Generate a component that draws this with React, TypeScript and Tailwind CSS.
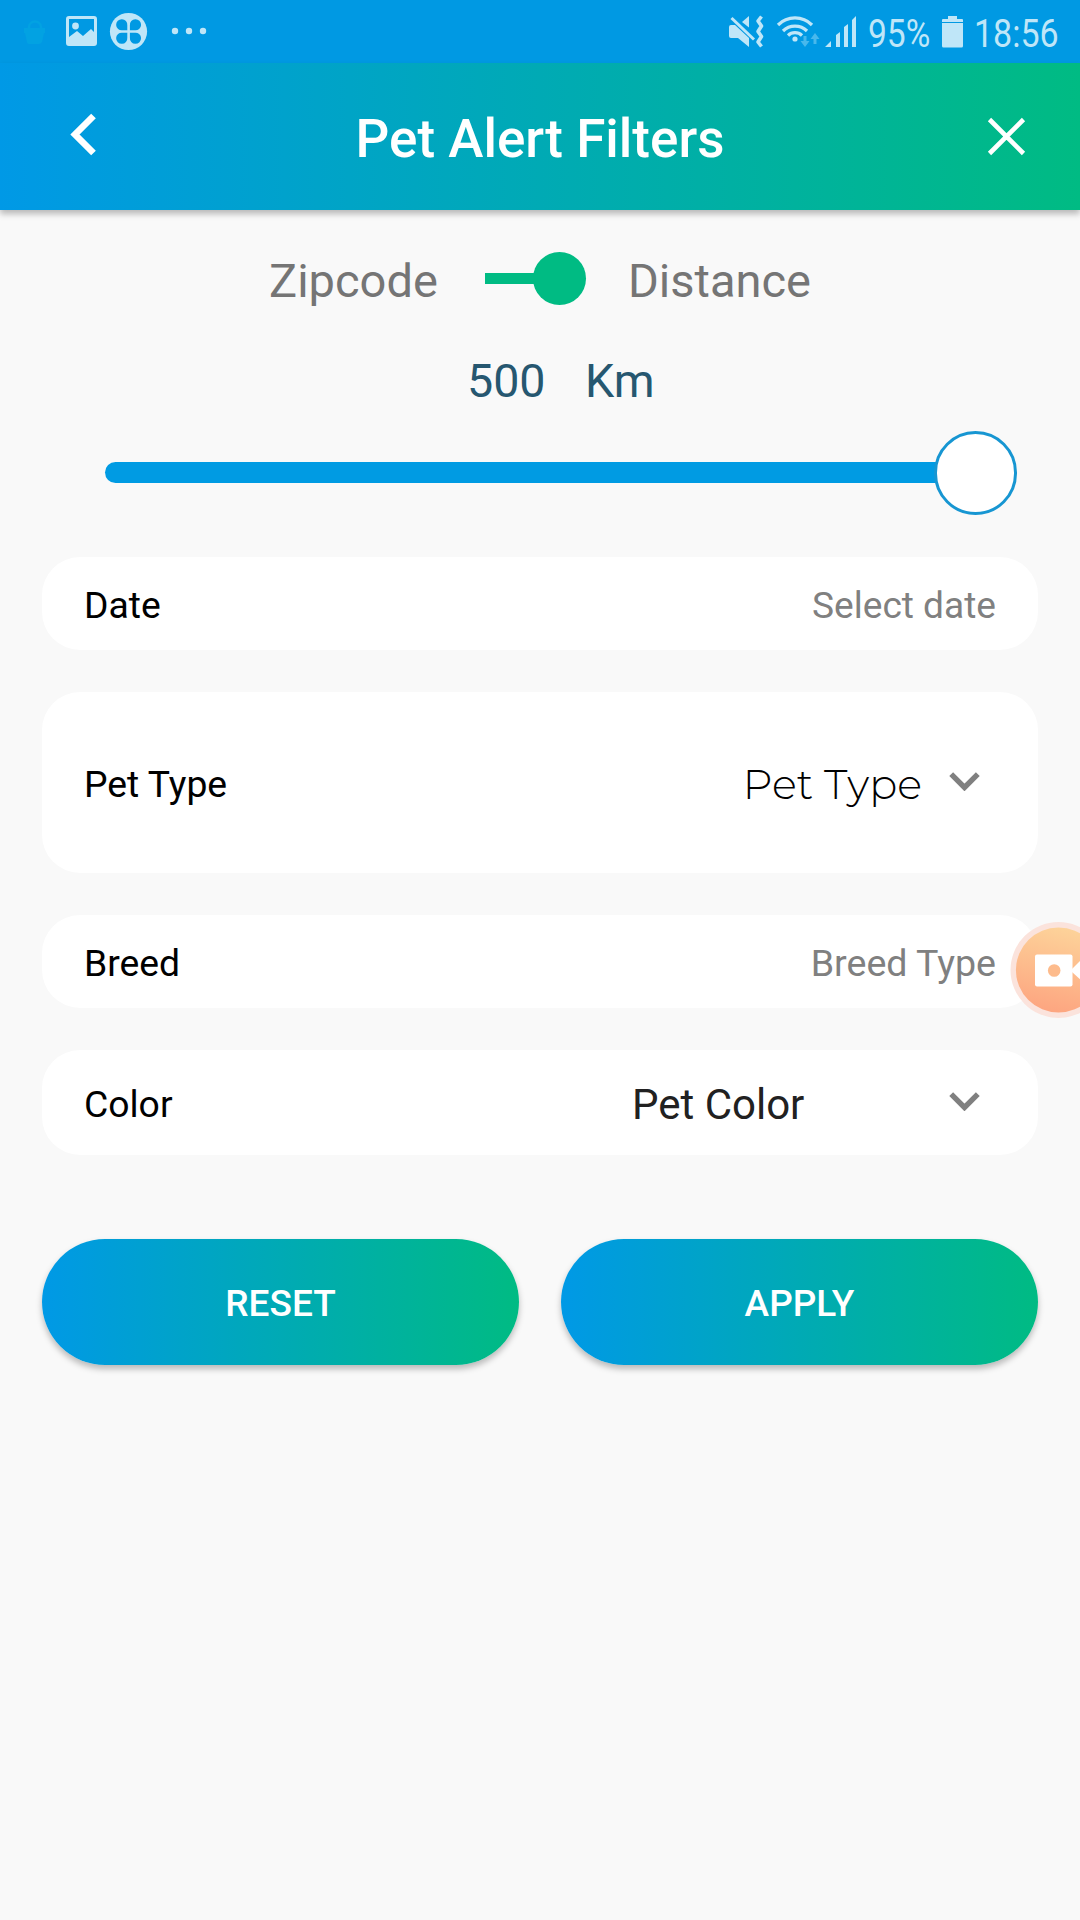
import React from "react";

function Chevron() {
  return (
    <svg width="31" height="19" viewBox="0 0 31 19" className="relative -top-px block">
      <path d="M2.2 2.2 15.5 15.5 28.8 2.2" fill="none" stroke="#808080" strokeWidth="5.4" />
    </svg>
  );
}

function StatusIconsLeft() {
  return (
    <svg width="240" height="63" viewBox="0 0 240 63" className="block">
      <path d="M24 28h21v5h-1l-2 9q-1 2-3 2H30q-3 0-3-2l-2-9h-1z" fill="#02a2e2" />
      <path d="M29 29v-2a6 5.500 0 0 1 12 0v2" fill="none" stroke="#02a2e2" strokeWidth="2.5" />
      <g fill="#bfe6f8">
        <path fillRule="evenodd" d="M69 16h25q3 0 3 3v24q0 3-3 3H69q-3 0-3-3V19q0-3 3-3zm0 3v18l8-6 6 5 8-7 3 3V19z" />
        <circle cx="75.500" cy="26" r="3.400" />
        <circle cx="128.500" cy="31.500" r="18.600" />
        <circle cx="175" cy="31" r="3.200" />
        <circle cx="189" cy="31" r="3.200" />
        <circle cx="203" cy="31" r="3.200" />
      </g>
      <g fill="#0099e3">
        <path d="M127.300 30.300h-5a5.600 5.600 0 1 1 5-5z" />
        <path d="M129.900 30.300h5a5.600 5.600 0 1 0-5-5z" />
        <path d="M127.300 32.700h-5a5.600 5.600 0 1 0 5 5z" />
        <path d="M129.900 32.700h5a5.600 5.600 0 1 1-5 5z" />
      </g>
    </svg>
  );
}

function StatusIconsRight() {
  return (
    <svg width="150" height="63" viewBox="720 0 150 63" className="block">
      <g fill="#bfe6f8">
        <path d="M731 25h4l14 13v9l-11-9h-7q-2 0-2-2v-9q0-2 2-2z" />
        <path d="M749 16v11.500l-7-5.500z" />
        <circle cx="795" cy="39" r="2.600" />
        <path d="M825 47h6v-6zM836 47h4V32l-4 3zM844 47h4V24l-4 3zM852 47h4V16l-4 4z" />
      </g>
      <g fill="none" stroke="#bfe6f8">
        <path d="m731.500 18 22.500 21.500" strokeWidth="3" />
        <path
          d="M761.500 16.500 758 21l3.500 5-3.500 5.500 3.500 5L758 42l3.500 4.500"
          strokeWidth="3.600"
          strokeLinejoin="round"
        />
        <path d="M778 25a24 24 0 0 1 34 0M783 31a17 17 0 0 1 24 0M788 35.500a10 10 0 0 1 14 0" strokeWidth="3.200" />
      </g>
      <path d="M803.500 36h3v5h3l-4.500 6-4.500-6h3zM813.500 44h3v-5h3l-4.500-6-4.500 6h3z" fill="#48b8ec" />
    </svg>
  );
}

function Row({ label, height, children }: { label: string; height: string; children: React.ReactNode }) {
  return (
    <section className={"flex items-center justify-between rounded-[38px] bg-white pl-[42px] " + height}>
      <span className="pt-[5px] text-[37.3px] leading-none text-black">{label}</span>
      {children}
    </section>
  );
}

function GradientButton({ children }: { children: string }) {
  return (
    <button className="flex h-[126px] flex-1 items-center justify-center rounded-full bg-linear-to-r/srgb from-[#0099e6] to-[#00bb83] pt-0.5 text-[37px] leading-none font-medium text-white shadow-[0_4px_6px_rgba(0,0,0,0.26)]">
      {children}
    </button>
  );
}

export default function App() {
  return (
    <div className="relative flex h-[1920px] w-[1080px] flex-col overflow-hidden bg-[#f9f9f9] font-['Roboto',sans-serif]">
      <div className="flex h-[63px] justify-between bg-[#0099e3] text-[#bfe6f8]">
        <StatusIconsLeft />
        <div className="flex h-[63px] items-center">
          <StatusIconsRight />
          <span className="-ml-[2px] w-[62px] origin-left scale-x-[0.85] pt-[5px] text-[39.5px] leading-none whitespace-nowrap">95%</span>
          <svg width="36" height="63" viewBox="930 0 36 63" className="block">
            <path d="M948 16h9v3h5q1 0 1 1v2h-21v-2q0-1 1-1h5zM942 23h21v23q0 1.500-1.500 1.500h-18q-1.500 0-1.500-1.500z" fill="#bfe6f8" />
          </svg>
          <span className="ml-[8px] w-[106px] origin-left scale-x-[0.86] pt-[5px] text-[39.5px] leading-none whitespace-nowrap">18:56</span>
        </div>
      </div>

      <header className="flex h-[147px] items-center justify-between bg-linear-to-r/srgb from-[#0099e6] to-[#00bb83] shadow-[0_4px_6px_rgba(0,0,0,0.26)]">
        <svg width="120" height="147" viewBox="0 63 120 147">
          <path d="M93.500 116 75 134.500 93.500 153" fill="none" stroke="#fff" strokeWidth="6.600" />
        </svg>
        <h1 className="pt-1.5 text-[53px] leading-none font-medium text-white">Pet Alert Filters</h1>
        <svg width="120" height="147" viewBox="960 63 120 147">
          <path d="m989.500 119.500 34 34m0-34-34 34" fill="none" stroke="#fff" strokeWidth="4.600" />
        </svg>
      </header>

      <div className="mt-[42px] flex h-[53px] items-center text-[47px] leading-none text-[#757575]">
        <span className="ml-[269px] w-[216px] pt-[3px]">Zipcode</span>
        <span className="h-[11px] w-[50px] bg-[#00bb83]" />
        <span className="-ml-0.5 size-[53px] rounded-full bg-[#00bb83]" />
        <span className="ml-[42px] pt-[3px]">Distance</span>
      </div>

      <div className="mt-[53px] flex h-12 text-[46.6px] leading-none text-[#265770]">
        <span className="ml-[467px] w-[118px]">500</span>
        <span>Km</span>
      </div>

      <div className="mt-[25px] mr-[63px] ml-[105px] flex h-[84px] items-center">
        <span className="mb-px h-[21px] flex-1 rounded-l-full bg-[#009be3]" />
        <span className="-ml-0.5 h-[84px] w-[83px] rounded-full border-3 border-[#1796d2] bg-white" />
      </div>

      <main className="mx-[42px] mt-[42px] flex flex-col gap-[42px]">
        <Row label="Date" height="h-[93px]">
          <span className="mr-[42px] pt-[5px] text-[37.1px] leading-none text-[#808080]">Select date</span>
        </Row>
        <Row label="Pet Type" height="h-[181px]">
          <div className="mr-[58px] flex items-center">
            <span className="mr-[27px] pt-[5px] font-['Montserrat','Inter',sans-serif] text-[41.5px] leading-none font-light text-black">Pet Type</span>
            <Chevron />
          </div>
        </Row>
        <Row label="Breed" height="h-[93px]">
          <span className="mr-[42px] pt-[5px] text-[37.6px] leading-none text-[#808080]">Breed Type</span>
        </Row>
        <Row label="Color" height="h-[105px]">
          <div className="mr-[58px] flex items-center">
            <span className="w-[317px] pt-[4px] text-[42px] leading-none text-[#212121]">Pet Color</span>
            <Chevron />
          </div>
        </Row>
      </main>

      <div className="mx-[42px] mt-[84px] flex gap-[42px]">
        <GradientButton>RESET</GradientButton>
        <GradientButton>APPLY</GradientButton>
      </div>

      <svg width="70" height="98" viewBox="1010 921 70 98" className="absolute top-[921px] right-0">
        <defs>
          <linearGradient id="rec" x1="0.6" y1="0" x2="0.4" y2="1">
            <stop offset="0" stopColor="#fdd39a" />
            <stop offset="1" stopColor="#fda580" />
          </linearGradient>
        </defs>
        <circle cx="1058.500" cy="970" r="48" fill="#fbe3dc" />
        <circle cx="1058.500" cy="970" r="42.600" fill="url(#rec)" />
        <rect x="1035" y="954.500" width="37.500" height="32" rx="2" fill="#fff" />
        <path d="M1072 969 1082 959v22l-10-9z" fill="#fff" />
        <circle cx="1054.200" cy="970.500" r="6.300" fill="#fdbb8c" />
      </svg>
    </div>
  );
}
